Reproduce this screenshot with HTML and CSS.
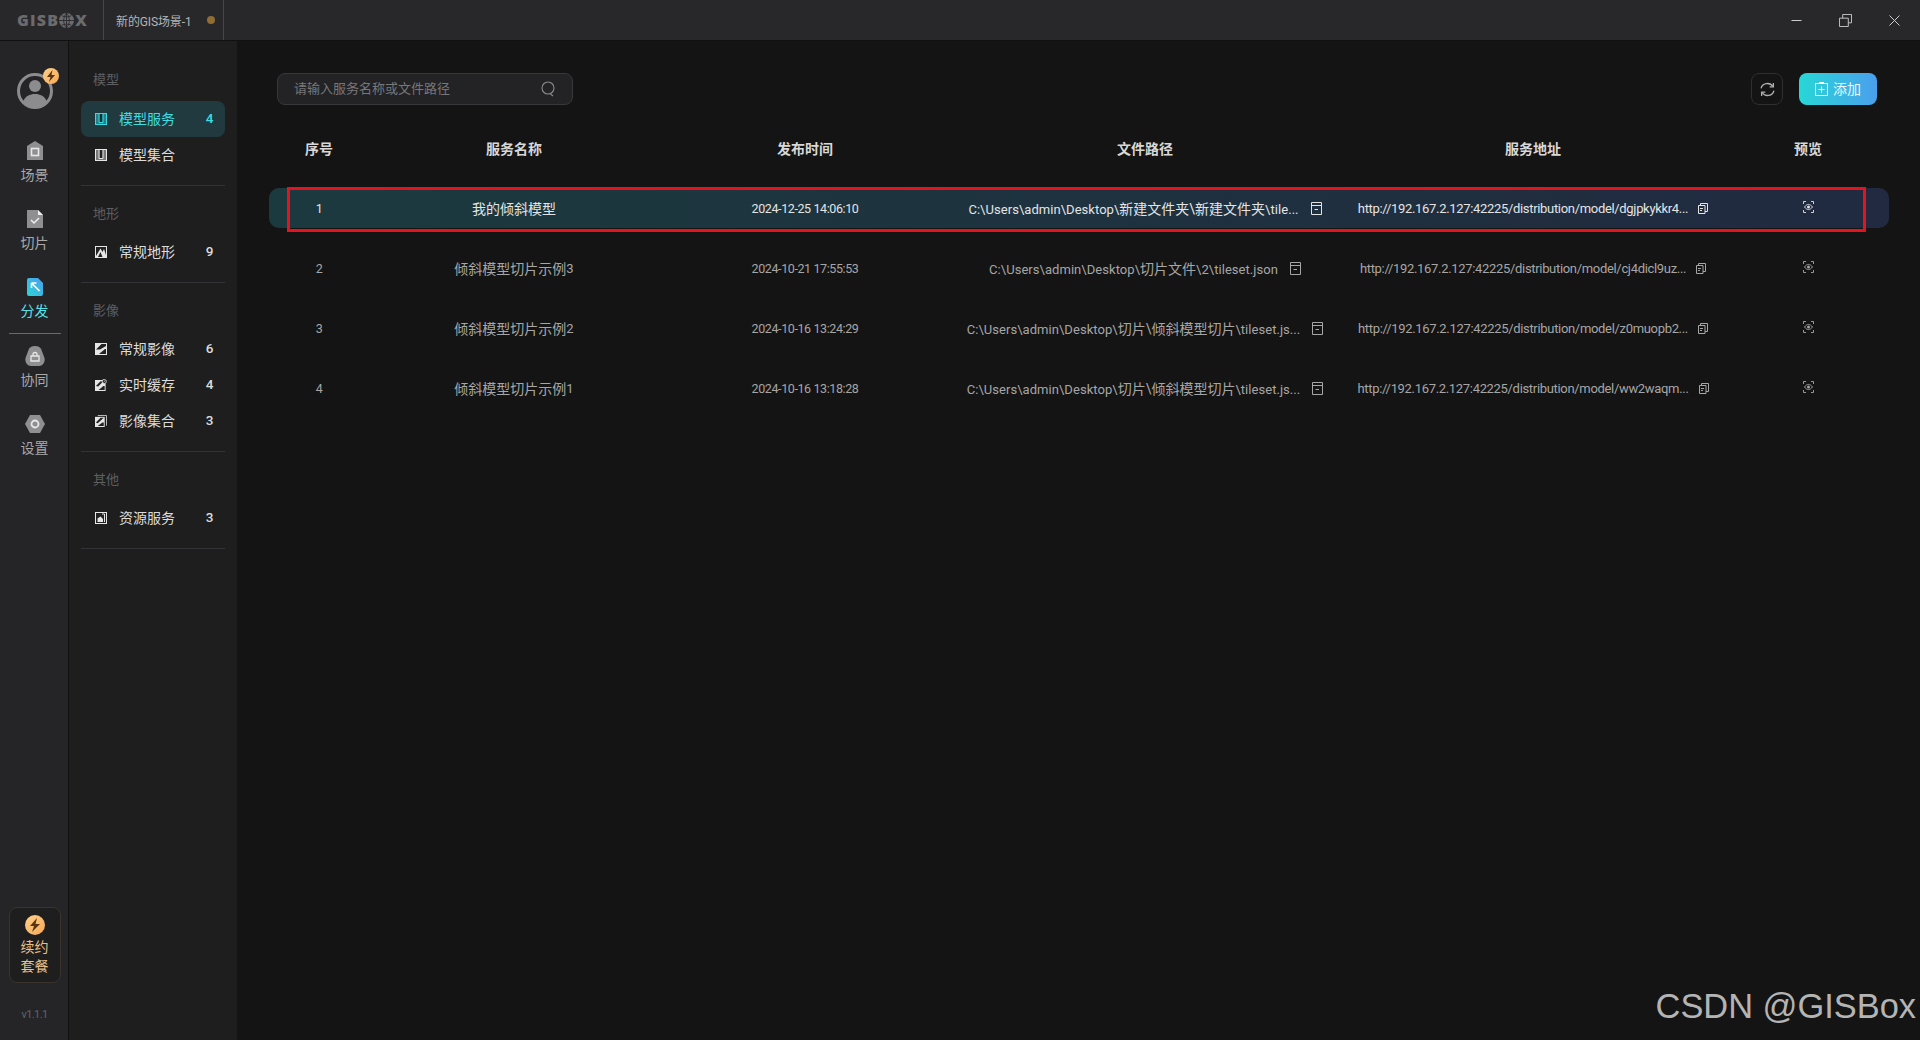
FILE: index.html
```html
<!DOCTYPE html>
<html lang="zh">
<head>
<meta charset="utf-8">
<title>GISBox</title>
<link rel="stylesheet" href="styles.css">
</head>
<body>
<svg class="defs" aria-hidden="true">
  <symbol id="i-doc" viewBox="0 0 11 13"><path d="M.5.5h10v12H.5zM.5 3.500h10M3.500 7.500h3.500" fill="none" stroke="currentColor"/></symbol>
  <symbol id="i-copy" viewBox="0 0 10 11"><path d="M.5 2.500h6.500v8H.5zM2.500 2.500V.5h7v8H7M2 5.500h3M2 7.500h2" fill="none" stroke="currentColor"/></symbol>
  <symbol id="i-eye" viewBox="0 0 11 12"><path d="M.5 3V.5H3M8 .5h2.500V3M.5 9v2.500H3M8 11.500h2.500V9" fill="none" stroke="currentColor" stroke-width=".9"/><path d="M1.500 6c2.400-3.400 5.600-3.400 8 0-2.400 3.400-5.600 3.400-8 0z" fill="none" stroke="currentColor" stroke-width=".9"/><circle cx="5.500" cy="6" r="1.500" fill="currentColor"/></symbol>
</svg>
<div class="app">
  <header class="titlebar">
    <div class="logo">GIS<span>B</span><svg class="logo-globe" viewBox="0 0 14 14"><circle cx="7" cy="7" r="7" fill="#6b6b6e"/><path d="M0 7h14M7 0v14M2.500 2.500c3 1.500 6 1.500 9 0M2.500 11.500c3-1.500 6-1.500 9 0M7 0C3.500 4 3.500 10 7 14M7 0c3.500 4 3.500 10 0 14" fill="none" stroke="#28282b" stroke-width=".8"/></svg><span>X</span></div>
    <div class="tab"><span>新的GIS场景-1</span><i class="tab-dot"></i></div>
    <div class="win">
      <svg viewBox="0 0 13 13"><path d="M1.500 6.500h10" stroke="#ccc" fill="none"/></svg>
      <svg viewBox="0 0 14 14"><path d="M.5 4.500h9.500v9H.5zM4 4.500V.5h9.500v9H10" stroke="#ccc" fill="none"/></svg>
      <svg viewBox="0 0 13 13"><path d="M1.500 1.500l10 10M11.500 1.500l-10 10" stroke="#ccc" fill="none"/></svg>
    </div>
  </header>
  <div class="body">
    <nav class="rail">
      <div class="avatar">
        <svg viewBox="0 0 36 36" class="avatar-svg"><circle cx="18" cy="18" r="16.500" fill="none" stroke="#8c8c8f" stroke-width="3"/><circle cx="18" cy="13" r="6" fill="#8c8c8f"/><path d="M6 29c2-6 7-8 12-8s10 2 12 8c-3 4-8 6-12 6s-9-2-12-6z" fill="#8c8c8f"/></svg>
        <span class="bolt-badge"><svg viewBox="0 0 16 16"><path d="M9.500 2L4 9h3.500L6 14l6-7H8.500z" fill="#5a3410"/></svg></span>
      </div>
      <a class="rail-item scene">
        <svg viewBox="0 0 16 19"><path d="M8 0l8 5v14H0V5z" fill="#8f8f92"/><rect x="4.500" y="7.500" width="7" height="7" fill="none" stroke="#e8e8e8" stroke-width="1.600"/></svg>
        <span>场景</span>
      </a>
      <a class="rail-item">
        <svg viewBox="0 0 16 18"><path d="M0 0h11l5 5v13H0z" fill="#8f8f92"/><path d="M11 0l5 5h-5z" fill="#eee"/><path d="M4 10l3 3 5-5" fill="none" stroke="#eee" stroke-width="1.500"/></svg>
        <span>切片</span>
      </a>
      <a class="rail-item active">
        <svg viewBox="0 0 16 18"><defs><linearGradient id="g1" x1="0" y1="1" x2="1" y2="0"><stop offset="0" stop-color="#2ad6d6"/><stop offset="1" stop-color="#4d9cf0"/></linearGradient></defs><path d="M2 0h9l5 5v11a2 2 0 0 1-2 2H2a2 2 0 0 1-2-2V2a2 2 0 0 1 2-2z" fill="url(#g1)"/><path d="M4.500 5h5M4.500 5v5M4.500 5l8 8" fill="none" stroke="#fff" stroke-width="1.600"/></svg>
        <span>分发</span>
      </a>
      <div class="rail-sep"></div>
      <a class="rail-item collab">
        <svg viewBox="0 0 20 20"><path d="M10 0c3.500 0 5.500 1.500 6.500 4l3 8c.8 4-1.500 8-5.500 8H6c-4 0-6.300-4-5.500-8l3-8C4.500 1.500 6.500 0 10 0z" fill="#8f8f92"/><path d="M6 10h8v5H6zM8 10V8.500a2 2 0 0 1 4 0V10" fill="none" stroke="#e8e8e8" stroke-width="1.300"/></svg>
        <span>协同</span>
      </a>
      <a class="rail-item settings">
        <svg viewBox="0 0 20 18"><path d="M5 0h10l5 9-5 9H5L0 9z" fill="#8f8f92"/><circle cx="10" cy="9" r="3.500" fill="none" stroke="#e8e8e8" stroke-width="1.800"/></svg>
        <span>设置</span>
      </a>
      <div class="rail-spacer"></div>
      <a class="renew">
        <span class="renew-icon"><svg viewBox="0 0 20 20"><path d="M12 3L5 11h4l-2 6 8-8h-4.500z" fill="#5a3410"/></svg></span>
        <span>续约</span>
        <span>套餐</span>
      </a>
      <div class="version">v1.1.1</div>
    </nav>
    <aside class="side">
      <section class="group">
        <h4>模型</h4>
        <a class="side-item active"><svg viewBox="0 0 12 12"><rect x=".5" y=".5" width="11" height="11" fill="#2a7f86" stroke="#35dbe0"/><path d="M4.500 1h3v8h-3z" fill="#123035"/><path d="M4 1v8.500h4V1" fill="none" stroke="#35dbe0"/></svg><span class="label">模型服务</span><b>4</b></a>
        <a class="side-item"><svg viewBox="0 0 12 12"><rect x=".5" y=".5" width="11" height="11" fill="#777" stroke="#e6e6e6"/><path d="M4.500 1h3v8h-3z" fill="#222"/><path d="M4 1v8.500h4V1" fill="none" stroke="#e6e6e6"/></svg><span class="label">模型集合</span></a>
      </section>
      <section class="group">
        <h4>地形</h4>
        <a class="side-item"><svg viewBox="0 0 12 12"><rect width="12" height="12" fill="#e6e6e6"/><path d="M1 10V1h10v8L9 3 7.500 6 5.500 2.500z" fill="#222"/><path d="M3 11l2.500-5 2 5z" fill="#222"/></svg><span class="label">常规地形</span><b>9</b></a>
      </section>
      <section class="group">
        <h4>影像</h4>
        <a class="side-item"><svg viewBox="0 0 12 12"><rect width="12" height="12" fill="#e6e6e6"/><path d="M1 6.500l5.500-5.500H11v2L5 6.500z" fill="#222"/><path d="M4 11l6-5h1v5z" fill="#222"/></svg><span class="label">常规影像</span><b>6</b></a>
        <a class="side-item"><svg viewBox="0 0 13 13"><path d="M0 1h8.500a3.500 3.500 0 0 0 3 4v8H0z" fill="#e6e6e6"/><path d="M1 7.500l5-5h3L3.500 8z" fill="#222"/><path d="M4 12l5-4.500h1.500V12z" fill="#222"/><circle cx="10" cy="2.700" r="2.300" fill="none" stroke="#ccc"/><path d="M10 1.500v1.300h1" fill="none" stroke="#ccc" stroke-width=".7"/></svg><span class="label">实时缓存</span><b>4</b></a>
        <a class="side-item"><svg viewBox="0 0 13 13"><path d="M3 .5h9.500v11" fill="none" stroke="#ccc"/><rect y="2" width="10.500" height="11" fill="#e6e6e6"/><path d="M1 8l5-5h3.500L3 9z" fill="#222"/><path d="M3 12l5-4h1.500v4z" fill="#222"/></svg><span class="label">影像集合</span><b>3</b></a>
      </section>
      <section class="group">
        <h4>其他</h4>
        <a class="side-item"><svg viewBox="0 0 12 12"><rect x=".5" y=".5" width="11" height="11" fill="#222" stroke="#e6e6e6"/><path d="M2.500 6.500l3-2 2.500 2.500v3H2.500z" fill="#e6e6e6"/><path d="M9.500 2v8M7 2h2.500" fill="none" stroke="#e6e6e6"/></svg><span class="label">资源服务</span><b>3</b></a>
      </section>
    </aside>
    <main class="main">
      <div class="toolbar">
        <div class="search">
          <span>请输入服务名称或文件路径</span>
          <svg viewBox="0 0 14 16"><circle cx="7" cy="7" r="6" fill="none" stroke="#8a8a8a" stroke-width="1.100"/><path d="M9.500 13l2.500 2" stroke="#8a8a8a" stroke-width="1.100"/></svg>
        </div>
        <div class="tools">
          <button class="refresh"><svg viewBox="0 0 14 14"><path d="M1 6a6 5.500 0 0 1 11-2M13 8a6 5.500 0 0 1-11 2" fill="none" stroke="#b0b0b0" stroke-width="1.200"/><path d="M12.500 1v3.500H9M1.500 13V9.500H5" fill="none" stroke="#b0b0b0" stroke-width="1.200"/></svg></button>
          <button class="add"><svg viewBox="0 0 13 14"><path d="M4 .5h5M.5 1.500h12v12H.5zM6.500 4.500v6M3.500 7.500h6" fill="none" stroke="#fff" stroke-width="1.100"/></svg><span>添加</span></button>
        </div>
      </div>
      <div class="table">
        <div class="row head">
          <div>序号</div><div>服务名称</div><div>发布时间</div><div>文件路径</div><div>服务地址</div><div>预览</div>
        </div>
        <div class="row item selected">
          <div class="num">1</div><div>我的倾斜模型</div><div class="num">2024-12-25 14:06:10</div>
          <div class="path"><span><span class="lat">C:\Users\admin\Desktop\</span>新建文件夹\新建文件夹<span class="lat">\tile...</span></span><svg class="doc"><use href="#i-doc"/></svg></div>
          <div class="url"><span class="url-text">http://192.167.2.127:42225/distribution/model/dgjpkykkr4...</span><svg class="copy"><use href="#i-copy"/></svg></div>
          <div><svg class="eye"><use href="#i-eye"/></svg></div>
        </div>
        <div class="row item">
          <div class="num">2</div><div>倾斜模型切片示例<span class="lat">3</span></div><div class="num">2024-10-21 17:55:53</div>
          <div class="path"><span><span class="lat">C:\Users\admin\Desktop\</span>切片文件<span class="lat">\2\tileset.json</span></span><svg class="doc"><use href="#i-doc"/></svg></div>
          <div class="url"><span class="url-text">http://192.167.2.127:42225/distribution/model/cj4dicl9uz...</span><svg class="copy"><use href="#i-copy"/></svg></div>
          <div><svg class="eye"><use href="#i-eye"/></svg></div>
        </div>
        <div class="row item">
          <div class="num">3</div><div>倾斜模型切片示例<span class="lat">2</span></div><div class="num">2024-10-16 13:24:29</div>
          <div class="path"><span><span class="lat">C:\Users\admin\Desktop\</span>切片\倾斜模型切片<span class="lat">\tileset.js...</span></span><svg class="doc"><use href="#i-doc"/></svg></div>
          <div class="url"><span class="url-text">http://192.167.2.127:42225/distribution/model/z0muopb2...</span><svg class="copy"><use href="#i-copy"/></svg></div>
          <div><svg class="eye"><use href="#i-eye"/></svg></div>
        </div>
        <div class="row item">
          <div class="num">4</div><div>倾斜模型切片示例<span class="lat">1</span></div><div class="num">2024-10-16 13:18:28</div>
          <div class="path"><span><span class="lat">C:\Users\admin\Desktop\</span>切片\倾斜模型切片<span class="lat">\tileset.js...</span></span><svg class="doc"><use href="#i-doc"/></svg></div>
          <div class="url"><span class="url-text">http://192.167.2.127:42225/distribution/model/ww2waqm...</span><svg class="copy"><use href="#i-copy"/></svg></div>
          <div><svg class="eye"><use href="#i-eye"/></svg></div>
        </div>
      </div>
      <div class="red-box"></div>
      <div class="watermark">CSDN @GISBox</div>
    </main>
  </div>
</div>
</body>
</html>
```
FILE: styles.css
```css
* { box-sizing: border-box; }
html, body { margin: 0; height: 100%; background: #141414; }
body { font-family: Roboto, "Noto Sans CJK SC", sans-serif; font-size: 14px; color: #ddd; overflow: hidden; }
.defs { display: none; }
.app { width: 1920px; height: 1040px; display: flex; flex-direction: column; }
a { display: block; }
button { font-family: inherit; cursor: pointer; }

.titlebar { height: 41px; background: #28282b; border-bottom: 1px solid #111; display: flex; align-items: stretch; flex: none; }
.logo { width: 103px; display: flex; align-items: center; padding-left: 17px; font: 800 16px/1 "Open Sans", sans-serif; letter-spacing: 1.2px; color: #6b6b6e; }
.logo-globe { width: 15px; height: 15px; margin: 0 1px 0 0; }
.tab { width: 121px; border-left: 1px solid #47474a; border-right: 1px solid #47474a; display: flex; align-items: center; padding-left: 12px; gap: 15px; font-size: 12px; letter-spacing: -0.12px; color: #b4b4b4; }
.tab-dot { width: 8px; height: 8px; border-radius: 50%; background: #8f6d33; }
.win { margin-left: auto; display: flex; align-items: center; gap: 36px; padding-right: 19px; }
.win svg { width: 13px; height: 13px; }

.body { flex: 1; display: flex; min-height: 0; }
.rail { width: 69px; flex: none; background: #252528; border-right: 1px solid #111; display: flex; flex-direction: column; align-items: center; padding: 32px 0 0 1px; }
.avatar { width: 36px; height: 36px; position: relative; margin-bottom: 32px; flex: none; }
.avatar-svg { width: 36px; height: 36px; display: block; }
.bolt-badge { position: absolute; right: -6px; top: -5px; width: 16px; height: 16px; border-radius: 50%; background: linear-gradient(135deg, #ffd08a, #f5a855); }
.bolt-badge svg { width: 16px; height: 16px; display: block; }
.rail-item { display: flex; flex-direction: column; align-items: center; gap: 5px; font-size: 14px; line-height: 20px; color: #a8a8a8; height: 68px; flex: none; }
.rail-item svg { width: 16px; height: 18px; flex: none; }
.rail-item.scene { height: 69px; }
.rail-item.scene svg { height: 19px; }
.rail-item.active { color: #56e3e8; height: 55px; }
.rail-item.collab { height: 69px; gap: 4px; }
.rail-item.collab svg { width: 20px; height: 20px; }
.rail-item.settings svg { width: 20px; }
.rail-sep { width: 52px; height: 1px; background: #6a6a6d; margin-bottom: 12px; flex: none; }
.rail-spacer { flex: 1; }
.renew { width: 52px; height: 76px; border: 1px solid #3a342c; border-radius: 8px; background: #1e1e1f; display: flex; flex-direction: column; align-items: center; padding-top: 7px; font-size: 14px; line-height: 19px; color: #e8c08a; flex: none; }
.renew-icon { width: 20px; height: 20px; border-radius: 50%; background: linear-gradient(135deg, #ffd08a, #f5a855); margin-bottom: 3px; flex: none; }
.renew-icon svg { width: 20px; height: 20px; display: block; }
.version { font-size: 11px; line-height: 14px; letter-spacing: -0.6px; color: #5f646c; margin-top: 25px; margin-bottom: 18px; }

.side { width: 168px; flex: none; background: #1e1e1f; padding: 0 12px; }
.group { border-bottom: 1px solid #333335; padding-bottom: 12px; }
.group h4 { margin: 0; height: 60px; padding: 30px 0 0 12px; font-weight: 400; font-size: 13px; line-height: 18px; color: #5f5f61; }
.group:not(:first-child) h4 { padding-top: 19px; height: 48px; }
.side-item { display: flex; align-items: center; height: 36px; padding: 0 12px 2px 14px; border-radius: 8px; color: #dcdcdc; font-size: 14px; }
.side-item svg { width: 12px; height: 12px; flex: none; margin-top: 2px; }
.side-item .label { margin-left: 12px; flex: 1; }
.side-item b { font-weight: 500; font-size: 13.5px; letter-spacing: -0.3px; }
.side-item.active { background: #203a40; color: #3fdde2; }

.main { flex: 1; position: relative; padding: 32px 31px 0 32px; min-width: 0; }
.toolbar { display: flex; justify-content: space-between; height: 32px; margin-left: 8px; }
.search { width: 296px; height: 32px; border: 1px solid #38383a; border-radius: 8px; background: #232325; display: flex; align-items: center; justify-content: space-between; padding: 0 17px 3px 16px; font-size: 13px; color: #77777a; }
.search svg { width: 14px; height: 16px; margin-top: 3px; }
.tools { display: flex; gap: 16px; margin-right: 12px; }
.refresh { width: 32px; height: 32px; padding: 0; background: transparent; border: 1px solid #2f2f31; border-radius: 8px; display: flex; align-items: center; justify-content: center; }
.refresh svg { width: 15px; height: 15px; }
.add { width: 78px; height: 32px; padding: 0 0 2px; border: 0; border-radius: 8px; background: linear-gradient(90deg, #27d7d7, #4a9fec); color: #eaf8fb; font-size: 14px; display: flex; align-items: center; justify-content: center; gap: 5px; }
.add svg { width: 13px; height: 14px; margin-top: 2px; }

.row { display: grid; grid-template-columns: 100px 290px 292px 388px 388px 162px; align-items: center; text-align: center; }
.row > div { display: flex; align-items: center; justify-content: center; white-space: nowrap; min-width: 0; }
.head { height: 83px; padding-top: 2px; font-weight: 700; color: #d8d8d8; font-size: 14px; }
.item { height: 40px; margin-bottom: 20px; color: #a6a6a6; border-radius: 10px; }
.item.selected { color: #e4e4e4; background: linear-gradient(90deg, #1b3a3e, #212a40); }
.num { font-size: 12.5px; letter-spacing: -0.4px; }
.lat { font-size: 13px; letter-spacing: 0.05px; }
.url-text { font-size: 13px; letter-spacing: -0.32px; }
.path { gap: 12px; }
.url { gap: 10px; }
.doc { width: 11px; height: 13px; flex: none; }
.copy { width: 10px; height: 11px; flex: none; }
.eye { width: 11px; height: 12px; margin-top: -3px; }
.red-box { position: absolute; left: 50px; top: 146px; width: 1579px; height: 45px; border: 3px solid #e3141f; pointer-events: none; }
.watermark { position: absolute; right: 4px; bottom: 17px; font: 34.4px/1 "Liberation Sans", sans-serif; color: #b4b4b4; }
```
